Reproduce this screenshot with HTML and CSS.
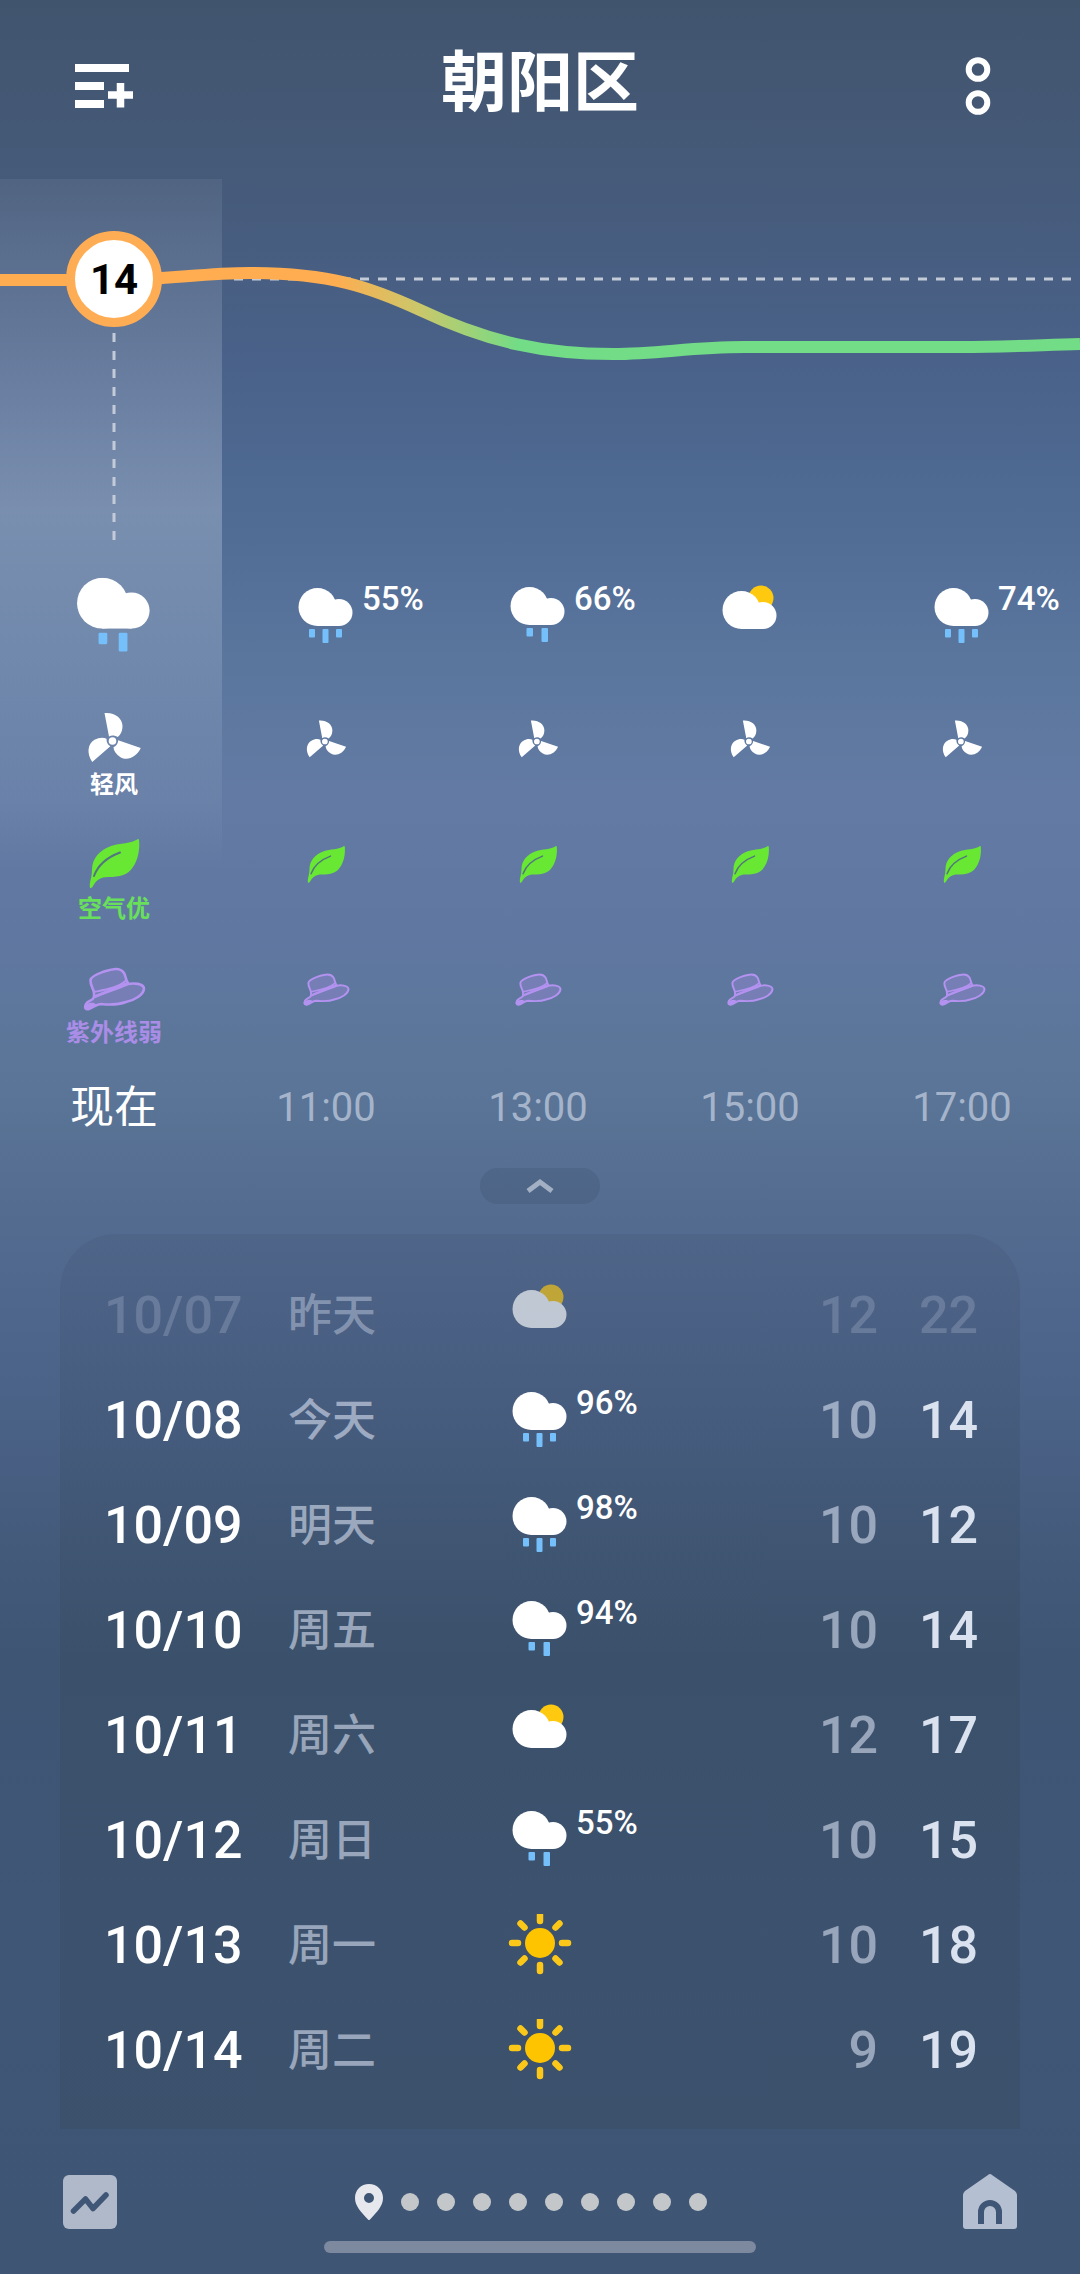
FILE: index.html
```html
<!DOCTYPE html>
<html lang="zh-CN">
<head>
<meta charset="utf-8">
<meta name="viewport" content="width=device-width, initial-scale=1">
<title>朝阳区</title>
<link rel="stylesheet" href="styles.css">
</head>
<body>
<svg class="sprite" aria-hidden="true">
  <defs>
    <symbol id="cloud" viewBox="0 0 55 38">
      <circle cx="19.500" cy="19" r="19"/>
      <circle cx="41" cy="24.500" r="13.500"/>
      <path d="M19 16H36L46 26L41 38H19Z"/>
    </symbol>
    <symbol id="rain3" viewBox="0 0 64 64">
      <use href="#cloud" x="4" y="3" width="55" height="38" fill="#fff"/>
      <g fill="#75c0fb"><rect x="15" y="44" width="6" height="8.500" rx="1"/><rect x="28.500" y="44" width="6" height="14" rx="1"/><rect x="42" y="44" width="6" height="8.500" rx="1"/></g>
    </symbol>
    <symbol id="rain2" viewBox="0 0 64 64">
      <use href="#cloud" x="4" y="2" width="55" height="38" fill="#fff"/>
      <g fill="#75c0fb"><rect x="20.500" y="43" width="6.500" height="8.500" rx="1"/><rect x="35.500" y="43" width="6.500" height="14" rx="1"/></g>
    </symbol>
    <symbol id="cloudy" viewBox="0 0 64 64">
      <circle cx="43" cy="13" r="12.500" fill="#fec90e"/>
      <use href="#cloud" x="4" y="6" width="55" height="38" fill="#fff"/>
    </symbol>
    <symbol id="sunny" viewBox="0 0 64 64">
      <circle cx="32" cy="29" r="15" fill="#ffc400"/>
      <g stroke="#fbc81a" stroke-width="6.500" stroke-linecap="round">
        <path d="M32 1V7M32 51V57M4 29H10M54 29H60M12.500 9.500L16.500 13.500M47.500 44.500L51.500 48.500M51.500 9.500L47.500 13.500M12.500 48.500L16.500 44.500"/>
      </g>
    </symbol>
    <symbol id="fan" viewBox="0 0 64 64">
      <g fill="#fff" transform="translate(30.500 30)">
        <circle r="3.800"/>
        <path id="blade" d="M-8-28C2-29 10-23 10-15C10-10 8-6 5-4C2-6-1-6-3.500-4.500Z"/>
        <use href="#blade" transform="rotate(120)"/>
        <use href="#blade" transform="rotate(240)"/>
      </g>
    </symbol>
    <symbol id="leaf" viewBox="0 0 64 64">
      <path fill="#68e733" d="M56 4C49 9 38 8 29 11C18 15 10 23 10 35C10 43 7 47 8 53C9 53 10 53 11 51C14 45 19 42 26 42C38 42 46 40 51 32C56 25 58 14 57 5Q57 4 56 4Z"/>
      <path fill="none" stroke="#52767f" stroke-width="2" stroke-linecap="round" d="M38 17.500C26 22 16 30 12 41"/>
    </symbol>
    <symbol id="hat" viewBox="0 0 64 64">
      <g fill="#b18fee" fill-opacity=".3" stroke="#b392f0" stroke-width="2.600" stroke-linejoin="round">
        <path d="M12 34C12 30 8 27 8.500 21C9 17 18 14 22 12.500C27 11 31 10 34 10C38 10 40 11 42 14C44 17 43 20 46 24L12 38Z"/>
        <path d="M12 38C22 34 34 30 46 25C51 24 62 24 62 30C61 36 53 41 44 43C36 46 28 46 19 45C14 45 11 49 7 50C4 51 2 49 4 45C6 41 11 42 12 38Z"/>
        <path fill="none" stroke-width="2" d="M12 33C22 31 36 29 44 21.500"/>
      </g>
      <path d="M4 46C7 43 10 44 12 44L15 46L7 50Q3 51 4 46Z" fill="#b392f0"/>
    </symbol>
  </defs>
</svg>

<header class="top">
  <button class="icon-btn" type="button" aria-label="城市列表">
    <svg width="60" height="60" viewBox="0 0 60 60"><g stroke="#fff"><path stroke-width="8" d="M0 12H54M0 30H29M0 48H29"/><path stroke-width="7.500" d="M33 39H58M45.500 27V51.500"/></g></svg>
  </button>
  <h1 class="city">朝阳区</h1>
  <button class="icon-btn" type="button" aria-label="更多">
    <svg width="60" height="60" viewBox="0 0 60 60"><g fill="none" stroke="#fff" stroke-width="6"><circle cx="33" cy="13.500" r="9.300"/><circle cx="33" cy="46.500" r="9.300"/></g></svg>
  </button>
</header>

<main>
  <section class="hourly">
    <svg class="chart" viewBox="0 179 1080 396" role="img" aria-label="气温曲线">
      <defs>
        <linearGradient id="temp" gradientUnits="userSpaceOnUse" x1="0" y1="0" x2="1080" y2="0">
          <stop offset=".31" stop-color="#ffad50"/><stop offset=".39" stop-color="#c9c86b"/><stop offset=".48" stop-color="#72dc86"/>
        </linearGradient>
      </defs>
      <g stroke="#c3cbd9" stroke-dasharray="9 9">
        <path stroke-width="3" d="M234 279H1080"/>
        <path stroke-width="3" d="M114 333V541"/>
      </g>
      <path fill="none" stroke="url(#temp)" stroke-width="12" d="M0 280H114C170 280 200 273 250 273C330 273 370 287 420 310C490 343 545 354 613 354C660 354 690 347 744 347H960C1010 347 1040 345 1080 344"/>
      <circle cx="114" cy="279" r="43.500" fill="#fff" stroke="#ffad54" stroke-width="9"/>
      <text class="now-temp" x="114" y="294" text-anchor="middle">14</text>
    </svg>
    <div class="hours">
      <div class="hour now">
        <div class="sky"><svg><use href="#rain2"/></svg></div>
        <div class="fact"><svg><use href="#fan"/></svg><span>轻风</span></div>
        <div class="fact air"><svg><use href="#leaf"/></svg><span>空气优</span></div>
        <div class="fact uv"><svg><use href="#hat"/></svg><span>紫外线弱</span></div>
        <div class="time">现在</div>
      </div>
      <div class="hour">
        <div class="sky"><span class="wx"><svg><use href="#rain3"/></svg><b class="pct">55%</b></span></div>
        <div class="fact"><svg><use href="#fan"/></svg></div>
        <div class="fact"><svg><use href="#leaf"/></svg></div>
        <div class="fact"><svg><use href="#hat"/></svg></div>
        <div class="time">11:00</div>
      </div>
      <div class="hour">
        <div class="sky"><span class="wx"><svg><use href="#rain2"/></svg><b class="pct">66%</b></span></div>
        <div class="fact"><svg><use href="#fan"/></svg></div>
        <div class="fact"><svg><use href="#leaf"/></svg></div>
        <div class="fact"><svg><use href="#hat"/></svg></div>
        <div class="time">13:00</div>
      </div>
      <div class="hour">
        <div class="sky"><span class="wx"><svg><use href="#cloudy"/></svg></span></div>
        <div class="fact"><svg><use href="#fan"/></svg></div>
        <div class="fact"><svg><use href="#leaf"/></svg></div>
        <div class="fact"><svg><use href="#hat"/></svg></div>
        <div class="time">15:00</div>
      </div>
      <div class="hour">
        <div class="sky"><span class="wx"><svg><use href="#rain3"/></svg><b class="pct">74%</b></span></div>
        <div class="fact"><svg><use href="#fan"/></svg></div>
        <div class="fact"><svg><use href="#leaf"/></svg></div>
        <div class="fact"><svg><use href="#hat"/></svg></div>
        <div class="time">17:00</div>
      </div>
    </div>
  </section>

  <button class="collapse" type="button" aria-label="收起">
    <svg width="30" height="16" viewBox="0 0 30 16"><path d="M3 13L15 4L27 13" fill="none" stroke="#a3b0c4" stroke-width="5"/></svg>
  </button>

  <section class="daily">
    <table>
      <colgroup><col class="c-date"><col class="c-day"><col class="c-sky"><col><col class="c-high"></colgroup>
      <tbody>
        <tr class="past"><td class="date">10/07</td><td class="day">昨天</td><td><span class="wx"><svg><use href="#cloudy"/></svg></span></td><td class="low">12</td><td class="high">22</td></tr>
        <tr><td class="date">10/08</td><td class="day">今天</td><td><span class="wx"><svg><use href="#rain3"/></svg><b class="pct">96%</b></span></td><td class="low">10</td><td class="high">14</td></tr>
        <tr><td class="date">10/09</td><td class="day">明天</td><td><span class="wx"><svg><use href="#rain3"/></svg><b class="pct">98%</b></span></td><td class="low">10</td><td class="high">12</td></tr>
        <tr><td class="date">10/10</td><td class="day">周五</td><td><span class="wx"><svg><use href="#rain2"/></svg><b class="pct">94%</b></span></td><td class="low">10</td><td class="high">14</td></tr>
        <tr><td class="date">10/11</td><td class="day">周六</td><td><span class="wx"><svg><use href="#cloudy"/></svg></span></td><td class="low">12</td><td class="high">17</td></tr>
        <tr><td class="date">10/12</td><td class="day">周日</td><td><span class="wx"><svg><use href="#rain2"/></svg><b class="pct">55%</b></span></td><td class="low">10</td><td class="high">15</td></tr>
        <tr><td class="date">10/13</td><td class="day">周一</td><td><span class="wx"><svg><use href="#sunny"/></svg></span></td><td class="low">10</td><td class="high">18</td></tr>
        <tr><td class="date">10/14</td><td class="day">周二</td><td><span class="wx"><svg><use href="#sunny"/></svg></span></td><td class="low">9</td><td class="high">19</td></tr>
      </tbody>
    </table>
  </section>
</main>

<footer class="bottom">
  <div class="tabs">
    <button class="icon-btn" type="button" aria-label="趋势">
      <svg width="54" height="56" viewBox="0 0 54 56"><rect y="1" width="54" height="54" rx="6" fill="#afb9c9"/><path d="M10.500 37L22.500 25L30 34.500L43 21" fill="none" stroke="#405676" stroke-width="5.500" stroke-linecap="round" stroke-linejoin="round"/></svg>
    </button>
    <div class="pages">
      <svg width="28" height="36" viewBox="0 0 28 36"><path fill="#e6e8ee" fill-rule="evenodd" d="M14 0C22 0 28 6 28 14C28 22 22 28 15 35.500Q14 36.500 13 35.500C6 28 0 22 0 14C0 6 6 0 14 0ZM14 9A5 5 0 1 0 14 19A5 5 0 1 0 14 9Z"/></svg>
      <i></i><i></i><i></i><i></i><i></i><i></i><i></i><i></i><i></i>
    </div>
    <button class="icon-btn" type="button" aria-label="主页">
      <svg width="54" height="56" viewBox="0 0 54 56"><path fill="#b4bfd1" d="M25 1Q27-1 29 1L52 17Q54 19 54 21V52Q54 55 51 55H3Q0 55 0 52V21Q0 19 2 17Z"/><path d="M18 50V38A9 9 0 0 1 36 38V50" fill="none" stroke="#405676" stroke-width="6"/></svg>
    </button>
  </div>
  <div class="home-bar"></div>
</footer>
</body>
</html>
```
FILE: styles.css
```css
* { box-sizing: border-box; }

body {
  margin: 0;
  min-height: 100vh;
  color: #fff;
  font-family: Roboto, "Noto Sans CJK SC", sans-serif;
  background: linear-gradient(
    #41546e 0%, #455a78 7%, #485e82 12%, #4a638b 17%, #506c95 23%,
    #5a769d 29%, #637ba4 35%, #6078a1 41%, #5a7597 48%, #546c90 53%,
    #4f668c 58%, #4a6186 63%, #425979 69%, #3f5574 73%, #405677 85%,
    #3f5574 100%
  );
}

.sprite { position: absolute; width: 0; height: 0; }

svg { display: block; }

button {
  padding: 0;
  border: 0;
  color: inherit;
  font: inherit;
  background: none;
}

/* Header */
.top {
  display: flex;
  justify-content: space-between;
  align-items: flex-start;
  height: 179px;
  padding: 56px 75px 0;
}

.city {
  margin: -22px 0 0;
  font-size: 66px;
  line-height: 100px;
  font-weight: 700;
}

/* Hourly forecast */
.hourly {
  background: linear-gradient(
    rgba(255, 255, 255, .06), rgba(235, 240, 250, .27) 48%,
    rgba(230, 235, 250, .17) 68%, rgba(255, 255, 255, 0)
  ) 0 0 / 222px 691px no-repeat;
}

.chart { width: 100%; }

.now-temp {
  fill: #000;
  font-size: 42px;
  font-weight: 700;
}

.hours {
  display: grid;
  grid-template-columns: repeat(5, 1fr);
  padding: 0 12px 0 8px;
}

.hour {
  display: flex;
  flex-direction: column;
  align-items: center;
  gap: 40px;
}

.sky { height: 96px; padding-top: 10px; }
.now .sky { padding-top: 0; }
.now .sky svg { width: 86px; height: 86px; }

.wx {
  display: block;
  position: relative;
  width: 64px;
  height: 64px;
}

.wx svg { width: 64px; height: 64px; }

.pct {
  position: absolute;
  top: -2px;
  left: 68px;
  font-size: 33px;
  line-height: 32px;
  font-weight: 500;
}

.fact {
  display: flex;
  flex-direction: column;
  align-items: center;
  height: 84px;
  padding-top: 8px;
  font-size: 24px;
  line-height: 20px;
  font-weight: 700;
  white-space: nowrap;
}

.fact svg { width: 48px; height: 48px; }
.now .fact { padding-top: 0; }
.now .fact svg { width: 64px; height: 64px; }
.air { color: #68e05a; }
.uv { color: #a98de6; }

.time {
  font-size: 40px;
  line-height: 50px;
  color: #a5b4ca;
}

.now .time { font-size: 44px; color: #fff; }

.collapse {
  display: flex;
  justify-content: center;
  align-items: center;
  width: 120px;
  height: 36px;
  margin: 35px auto 30px;
  border-radius: 18px;
  background: rgba(50, 65, 95, .18);
}

/* Daily forecast */
.daily {
  margin: 0 60px;
  padding: 29px 0 26px;
  border-radius: 56px 56px 0 0;
  background: linear-gradient(rgba(45, 55, 80, .1), rgba(45, 65, 75, .22) 45%);
}

table {
  width: 100%;
  table-layout: fixed;
  border-collapse: collapse;
}

.c-date { width: 228px; }
.c-day { width: 192px; }
.c-sky { width: 120px; }
.c-high { width: 142px; }

td {
  height: 105px;
  padding: 0;
  font-size: 52px;
  line-height: 60px;
  font-weight: 500;
}

td .wx { margin: 0 auto; }
.date { padding-left: 44px; }
.day { font-size: 44px; color: rgba(225, 232, 248, .56); }
.low { text-align: right; color: rgba(225, 232, 248, .56); }
.high { padding-right: 42px; text-align: right; color: #dae2ef; }

.past .date, .past .low, .past .high { color: rgba(225, 232, 248, .2); }
.past .day { color: rgba(225, 232, 248, .4); }
.past .wx { opacity: .65; }

/* Footer */
.bottom { padding: 45px 63px 21px; }

.tabs {
  display: flex;
  justify-content: space-between;
  align-items: center;
}

.pages { display: flex; align-items: center; }
.pages > * { margin-right: 18px; }

.pages i {
  width: 18px;
  height: 18px;
  border-radius: 50%;
  background: #c4c7ca;
}

.home-bar {
  width: 432px;
  height: 12px;
  margin: 11px auto 0;
  border-radius: 6px;
  background: #7c899f;
}
```
